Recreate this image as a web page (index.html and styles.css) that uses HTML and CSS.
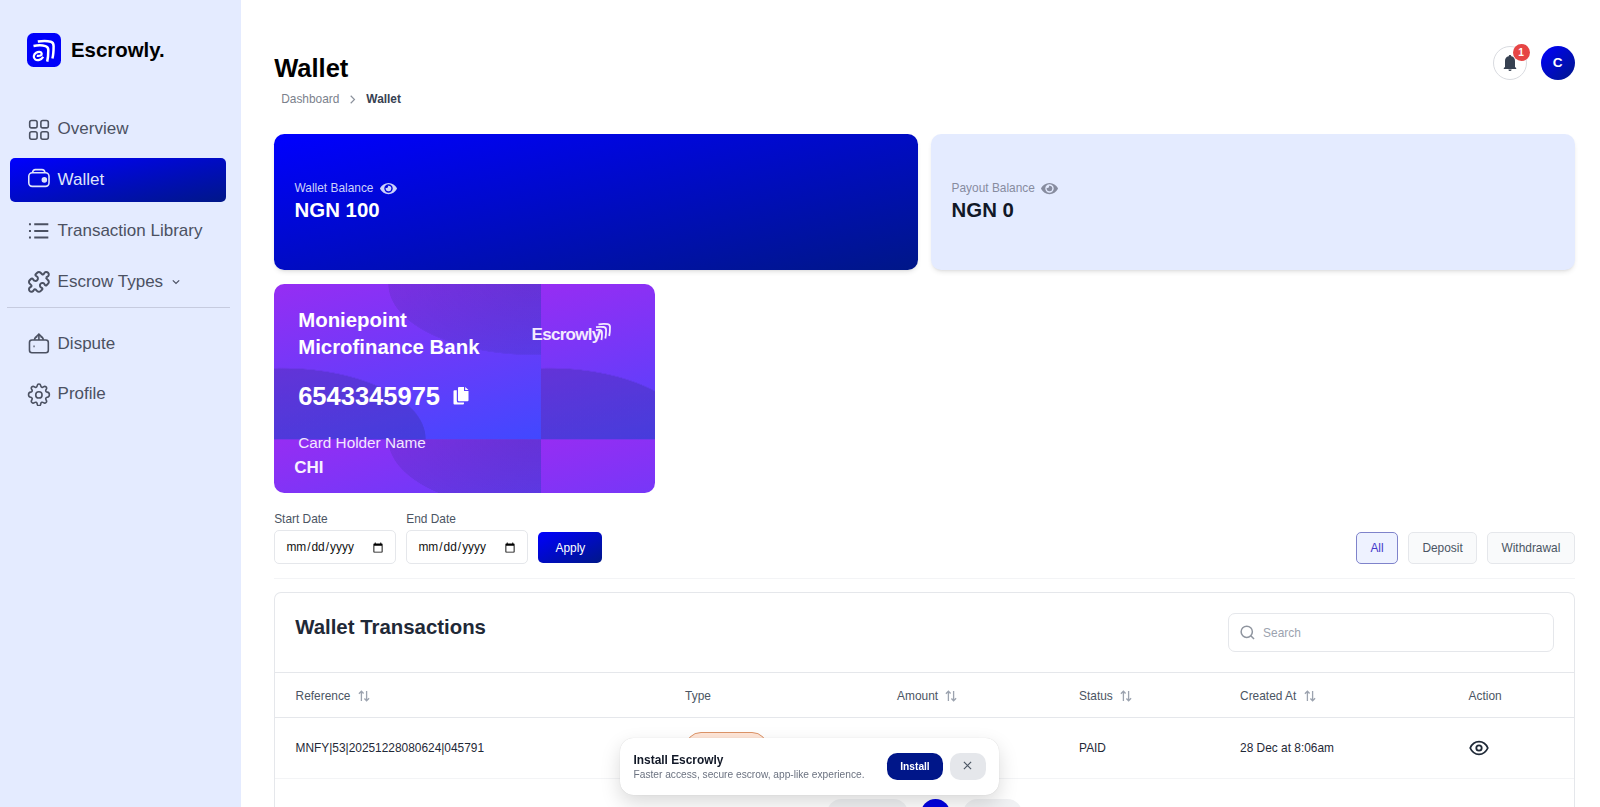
FILE: index.html
```html
<!DOCTYPE html>
<html lang="en">

<head>
    <meta charset="UTF-8">
    <meta name="viewport" content="width=device-width, initial-scale=1.0">
    <title>Escrowly - Wallet</title>
    <link rel="stylesheet" href="styles.css">
</head>

<body>
    <!-- icons used more than once -->
    <svg class="sprite">
        <symbol id="eye" viewBox="0 0 576 512">
            <path fill="currentColor" d="M572.52 241.4C518.29 135.59 410.93 64 288 64S57.68 135.64 3.48 241.41a32.35 32.35 0 0 0 0 29.19C57.71 376.41 165.07 448 288 448s230.32-71.64 284.52-177.41a32.35 32.35 0 0 0 0-29.19zM288 400a144 144 0 1 1 144-144 143.93 143.93 0 0 1-144 144zm0-240a95.31 95.31 0 0 0-25.31 3.79 47.85 47.85 0 0 1-66.9 66.9A95.78 95.78 0 1 0 288 160z" />
        </symbol>
        <symbol id="sort" viewBox="0 0 12 12">
            <path d="M3.4 11V1.2M.9 3.7l2.5-2.5 2.2 2.3M8.6 1v9.8M6.4 8.5l2.2 2.3 2.5-2.5" fill="none" stroke="currentColor" stroke-width="1.3" />
        </symbol>
    </svg>

    <div class="sidebar">
        <div class="brand">
            <svg class="brandLogo" viewBox="0 0 34 34">
                <rect width="34" height="34" rx="6.5" fill="#0000fa" />
                <g fill="none" stroke="#fff">
                    <path d="M10.8 8.6c4-.6 10-.6 13 .2 2.200.6 2.800 1.800 2.800 4.200 0 4.500-.2 9-1.200 12.500" stroke-width="2.500" />
                    <path d="M6.500 13c4-.8 9-.8 12 .1 2.100.6 2.800 1.800 2.800 4 0 4-.2 8-1.100 11.500" stroke-width="2.500" />
                    <path d="M9.800 22.800c3 .5 5.200-.4 4.900-2.200-.4-1.900-3.300-2.200-5.600-.8-2.700 1.700-3.100 5-.9 6.600 2.300 1.600 6 .5 8-2.600" stroke-width="2.200" />
                </g>
            </svg>
            <span>Escrowly.</span>
        </div>

        <ul class="menu">
            <li class="menuItem">
                <svg viewBox="0 0 24 24">
                    <rect x="2.700" y="2.500" width="7.500" height="7.500" rx="2" />
                    <rect x="14" y="2.500" width="7.500" height="7.500" rx="2" />
                    <rect x="2.700" y="13.900" width="7.500" height="7.500" rx="2" />
                    <rect x="14" y="13.900" width="7.500" height="7.500" rx="2" />
                </svg>
                Overview
            </li>
            <li class="menuItem active">
                <svg viewBox="0 0 24 24">
                    <rect x="1.800" y="4.800" width="20.400" height="13.700" rx="3.500" />
                    <path d="M5.500 4.800c.3-2.300 1-3.200 3-3.200h6.600c2 0 2.800.9 3 3.200" />
                    <circle cx="17.500" cy="12" r="2" fill="currentColor" />
                </svg>
                Wallet
            </li>
            <li class="menuItem">
                <svg viewBox="0 0 24 24">
                    <path d="M7.300 5.300h14.200M7.300 12h14.200M7.300 18.700h14.200" stroke-width="2" />
                    <path d="M2 5.300h2M2 12h2M2 18.700h2" stroke-width="2" />
                </svg>
                Transaction Library
            </li>
            <li class="menuItem">
                <svg viewBox="0 0 24 24">
                    <path stroke-width="2" d="M19.439 7.850c-.049.322.059.648.289.878l1.568 1.568c.47.47.706 1.087.706 1.704s-.235 1.233-.706 1.704l-1.611 1.611a.98.98 0 0 1-.837.276c-.47-.07-.802-.48-.968-.925a2.501 2.501 0 1 0-3.214 3.214c.446.166.855.497.925.968a.979.979 0 0 1-.276.837l-1.610 1.610a2.404 2.404 0 0 1-1.705.707 2.402 2.402 0 0 1-1.704-.706l-1.568-1.568a1.026 1.026 0 0 0-.877-.29c-.493.074-.84.504-1.020.968a2.500 2.500 0 1 1-3.237-3.237c.464-.18.894-.527.967-1.020a1.026 1.026 0 0 0-.289-.877l-1.568-1.568A2.402 2.402 0 0 1 1.998 12c0-.617.236-1.234.706-1.704L4.230 8.770c.24-.24.581-.353.917-.303.515.077.877.528 1.073 1.010a2.500 2.500 0 1 0 3.259-3.259c-.482-.196-.933-.558-1.010-1.073-.05-.336.062-.676.303-.917l1.525-1.525A2.402 2.402 0 0 1 12 1.998c.617 0 1.234.236 1.704.706l1.568 1.568c.23.23.556.338.877.29.493-.074.84-.504 1.020-.968a2.500 2.500 0 1 1 3.237 3.237c-.464.18-.894.527-.967 1.020Z" />
                </svg>
                Escrow Types
                <svg class="arrow" viewBox="0 0 10 10"><path d="M1.800 3.300 5 6.500l3.200-3.200" /></svg>
            </li>
        </ul>
        <ul class="menu second">
            <li class="menuItem">
                <svg viewBox="0 0 24 24">
                    <rect x="2.500" y="8" width="19" height="13" rx="2.500" />
                    <path d="M12 8V2.200M9.200 4.900 12 2.200l2.800 2.700M7.500 8c.2-2 1-3.100 3-3.600M16.500 8c-.2-2-1-3.100-3-3.600" />
                    <path d="M6.500 14.500h1.200" />
                </svg>
                Dispute
            </li>
            <li class="menuItem">
                <svg viewBox="0 0 24 24">
                    <path d="M10.300 3.200c.3-2.200 3.100-2.200 3.400 0 .2 1.300 1.400 1.800 2.500 1 1.800-1.300 3.800.6 2.500 2.400-.8 1.200-.3 2.300 1 2.500 2.700.4 2.700 4.400 0 4.800-1.300.3-1.800 1.400-1 2.500 1.300 1.800-.7 3.800-2.500 2.500-1.100-.8-2.300-.3-2.500 1-.3 2.700-3.100 2.700-3.400 0-.2-1.300-1.400-1.800-2.500-1-1.800 1.300-3.800-.7-2.500-2.500.8-1.100.3-2.300-1-2.500-2.700-.4-2.700-4.400 0-4.800 1.300-.2 1.800-1.300 1-2.500C4 4.800 6 2.900 7.800 4.200c1.100.8 2.300.3 2.500-1z" stroke-width="1.500" transform="translate(-.9 -.6) scale(1.08)" />
                    <circle cx="12" cy="12" r="3.200" />
                </svg>
                Profile
            </li>
        </ul>
    </div>

    <div class="main">
        <div class="header">
            <div>
                <h1>Wallet</h1>
                <div class="breadcrumb">
                    <span>Dashboard</span>
                    <svg viewBox="0 0 10 10"><path d="M3 .8 7.200 5 3 9.200" /></svg>
                    <b>Wallet</b>
                </div>
            </div>
            <div class="account">
                <div class="bell">
                    <svg viewBox="0 0 14 16">
                        <path d="M7 0c.8 0 1.200.5 1.300 1.200C10.900 1.700 12 3.600 12 6v6l1.200 1v.9H.8V13L2 12V6c0-2.400 1.100-4.300 3.700-4.800C5.800.5 6.200 0 7 0zM5.400 14.400h3.200a1.600 1.600 0 0 1-3.200 0z" />
                    </svg>
                    <span class="count">1</span>
                </div>
                <div class="avatar">C</div>
            </div>
        </div>

        <div class="balances">
            <div class="balance blue">
                <p>Wallet Balance <svg><use href="#eye" /></svg></p>
                <h2>NGN 100</h2>
            </div>
            <div class="balance light">
                <p>Payout Balance <svg><use href="#eye" /></svg></p>
                <h2>NGN 0</h2>
            </div>
        </div>

        <div class="bankCard">
            <div class="bankTop">
                <h3>Moniepoint Microfinance Bank</h3>
                <div class="cardLogo">
                    <span>Escrowly</span>
                    <svg viewBox="0 0 20 20">
                        <path d="M5.500 2.300c3-.5 7-.5 9.300-.2 1.800.3 2.200 1.200 2.200 3 0 3.500 0 6-.8 9" />
                        <path d="M3 5.200c3-.5 5.500-.5 7.800-.2 1.800.3 2.300 1.200 2.300 3 0 3 0 5.500-.8 8.500" />
                        <path d="M3 8.200c1.500-.3 2.500-.4 3.800-.2 1.700.3 2.200 1.200 2.200 3 0 2.500 0 4.500-.6 7" />
                    </svg>
                </div>
            </div>
            <div class="accountNumber">
                6543345975
                <svg viewBox="0 0 16 18">
                    <path d="M6 0h5v4h4.500v9.200a1 1 0 0 1-1 1H6a1 1 0 0 1-1-1V1a1 1 0 0 1 1-1zM12.200 0l3.300 3h-3.300z" />
                    <path d="M3.800 3.200V14a1.500 1.500 0 0 0 1.500 1.500H11v1a1 1 0 0 1-1 1H1.500a1 1 0 0 1-1-1V4.200a1 1 0 0 1 1-1z" />
                </svg>
            </div>
            <p class="holderLabel">Card Holder Name</p>
            <p class="holder">CHI</p>
        </div>

        <div class="filters">
            <div class="dates">
                <label>Start Date <input type="date"></label>
                <label>End Date <input type="date"></label>
                <button class="apply">Apply</button>
            </div>
            <div class="types">
                <button class="type selected">All</button>
                <button class="type">Deposit</button>
                <button class="type">Withdrawal</button>
            </div>
        </div>

        <div class="transactions">
            <div class="tableTop">
                <h2>Wallet Transactions</h2>
                <div class="search">
                    <svg viewBox="0 0 16 16"><circle cx="7.200" cy="7.200" r="6" /><path d="m11.500 11.500 3.500 3.500" /></svg>
                    <input type="text" placeholder="Search">
                </div>
            </div>
            <div class="row rowHead">
                <div>Reference <svg><use href="#sort" /></svg></div>
                <div>Type</div>
                <div>Amount <svg><use href="#sort" /></svg></div>
                <div>Status <svg><use href="#sort" /></svg></div>
                <div>Created At <svg><use href="#sort" /></svg></div>
                <div>Action</div>
            </div>
            <div class="row">
                <div>MNFY|53|20251228080624|045791</div>
                <div><span class="tag"></span></div>
                <div></div>
                <div>PAID</div>
                <div>28 Dec at 8:06am</div>
                <div>
                    <svg class="view" viewBox="0 0 20 16">
                        <path d="M1.200 8C3 4 6.200 1.700 10 1.700S17 4 18.800 8C17 12 13.800 14.300 10 14.300S3 12 1.200 8z" />
                        <circle cx="10" cy="8" r="2.700" />
                    </svg>
                </div>
            </div>
            <div class="pagination">
                <span class="page prev"></span>
                <span class="page current"></span>
                <span class="page next"></span>
            </div>
        </div>
    </div>

    <div class="install">
        <div class="installText">
            <b>Install Escrowly</b>
            <p>Faster access, secure escrow, app-like experience.</p>
        </div>
        <button class="installBtn">Install</button>
        <button class="closeBtn"><svg viewBox="0 0 10 10"><path d="m1 1 8 8M9 1 1 9" /></svg></button>
    </div>
</body>

</html>
```
FILE: styles.css
```css
* {
    margin: 0;
    padding: 0;
    box-sizing: border-box;
    font-family: "Liberation Sans", Arial, Helvetica, sans-serif;
}

html {
    font-size: 13.6px;
}

body {
    height: 100vh;
    display: flex;
    overflow: hidden;
    background-color: #fff;
    color: #1f2937;
}

.sprite {
    display: none;
}

button {
    border: none;
    cursor: pointer;
    font-size: .875rem;
}

/* sidebar */
.sidebar {
    width: 240.5px;
    flex-shrink: 0;
    background-color: #e4ebff;
    padding-top: 33px;
}

.brand {
    display: flex;
    align-items: center;
    gap: 10px;
    padding-left: 27px;
    height: 34px;
    color: #000;
    font-size: 1.5rem;
    font-weight: bold;
}

.brandLogo {
    width: 34px;
    height: 34px;
}

.menu {
    list-style: none;
    display: flex;
    flex-direction: column;
    gap: 6.6px;
    margin: 40.4px 11px 0 7px;
    padding: 0 3px 3.5px;
    border-bottom: 1px solid #c6cbdf;
}

.second {
    margin-top: 13.2px;
    border: none;
}

.menuItem {
    display: flex;
    align-items: center;
    gap: .5rem;
    width: 216px;
    height: 3.25rem;
    padding-left: 1.25rem;
    border-radius: 5px;
    font-size: 1.25rem;
    color: #4b5162;
}

.menuItem svg {
    width: 1.75rem;
    height: 1.75rem;
    fill: none;
    stroke: currentColor;
    stroke-width: 1.6;
}

.menuItem .arrow {
    width: 10px;
    height: 10px;
    margin-left: 1px;
    stroke-width: 1.2;
}

.active {
    background: linear-gradient(to bottom right, #0000ff, #001788);
    color: #dfe4fb;
}

/* header */
.main {
    flex: 1;
    padding: 46px 25.4px 0 33.7px;
}

.header {
    display: flex;
    justify-content: space-between;
    height: 88.4px;
}

.header h1 {
    margin-top: 7px;
    font-size: 1.875rem;
    line-height: 2.25rem;
    color: #000;
}

.breadcrumb {
    display: flex;
    align-items: center;
    margin-top: 7px;
    padding-left: 7px;
    font-size: .875rem;
    line-height: 1.25rem;
    color: #7b818c;
}

.breadcrumb svg {
    width: 9px;
    height: 9px;
    margin: 0 9px;
    fill: none;
    stroke: #8b919c;
    stroke-width: 1.3;
}

.breadcrumb b {
    color: #374151;
}

.account {
    display: flex;
    gap: 14px;
    padding-top: .4px;
}

.bell {
    position: relative;
    width: 34px;
    height: 34px;
    display: grid;
    place-content: center;
    border: 1px solid #d9dbe0;
    border-radius: 50%;
}

.bell svg {
    width: 14px;
    height: 16px;
    fill: #374151;
}

.count {
    position: absolute;
    top: -3px;
    right: -4px;
    width: 17px;
    height: 17px;
    border-radius: 50%;
    background-color: #e64545;
    color: #fff;
    font-size: 10.2px;
    font-weight: bold;
    line-height: 17px;
    text-align: center;
}

.avatar {
    width: 34px;
    height: 34px;
    border-radius: 50%;
    background: linear-gradient(to bottom right, #0000ff, #001788);
    color: #fff;
    font-size: 1rem;
    font-weight: bold;
    line-height: 34px;
    text-align: center;
}

/* balances */
.balances {
    display: grid;
    grid-template-columns: 1fr 1fr;
    gap: 1rem;
}

.balance {
    height: 10rem;
    padding: 46px 1.5rem 0;
    border-radius: .75rem;
    box-shadow: 0 3px 5px -1px rgba(0, 0, 0, .1), 0 2px 3px -2px rgba(0, 0, 0, .1);
}

.balance p {
    display: flex;
    align-items: center;
    gap: 6.5px;
    font-size: .875rem;
    line-height: 1.25rem;
}

.balance svg {
    width: 17px;
    height: 15px;
}

.balance h2 {
    margin-top: 1.7px;
    font-size: 1.5rem;
    line-height: 1.75rem;
}

.blue {
    background: linear-gradient(to bottom right, #0000ff, #001788);
    color: #fff;
}

.blue p {
    color: #ccd2fa;
}

.light {
    background-color: #e4ebff;
}

.light p {
    color: #878c9f;
}

.light h2 {
    color: #111827;
}

/* bank card */
.bankCard {
    width: 28rem;
    height: 209.4px;
    margin-top: 13.2px;
    padding: 23.5px 1.5rem 0 24px;
    border-radius: .75rem;
    color: #fff;
    background:
        radial-gradient(145px 71px at 259px 0, rgba(40, 40, 120, .25), rgba(40, 40, 120, .16) 99.5%, transparent 100%),
        radial-gradient(144px 71px at 8px 155px, rgba(40, 40, 120, .25) 99.5%, transparent 100%),
        linear-gradient(165deg, #962df3, #4148ff);
    background-size: 267px 155.3px;
}

.bankTop {
    display: flex;
    justify-content: space-between;
}

.bankCard h3 {
    width: 190px;
    font-size: 1.5rem;
    line-height: 2rem;
}

.cardLogo {
    display: flex;
    margin: 16px 22px 0 0;
    font-size: 17px;
    font-weight: bold;
    letter-spacing: -.7px;
    line-height: 24px;
    color: #f3eaff;
}

.cardLogo svg {
    width: 20px;
    height: 20px;
    margin: -1px 0 0 -8px;
    fill: none;
    stroke: currentColor;
    stroke-width: 1.8;
}

.accountNumber {
    display: flex;
    align-items: center;
    gap: 13px;
    margin-top: 17.5px;
    font-size: 1.875rem;
    font-weight: bold;
    line-height: 2.5rem;
}

.accountNumber svg {
    width: 16px;
    height: 18px;
    fill: #fff;
}

.holderLabel {
    margin-top: 18.5px;
    font-size: 1.125rem;
    line-height: 1.75rem;
    color: #f1e8ff;
}

.holder {
    margin: .8px 0 0 -4px;
    font-size: 1.25rem;
    font-weight: bold;
    line-height: 1.75rem;
    color: #f7f0ff;
}

/* filters */
.filters {
    display: flex;
    justify-content: space-between;
    align-items: flex-end;
    margin-top: 18px;
    padding-bottom: 14px;
    border-bottom: 1px solid #f3f4f6;
}

.dates,
.types {
    display: flex;
    align-items: flex-end;
    gap: .75rem;
}

.dates label {
    display: block;
    width: 121.9px;
    font-size: .875rem;
    line-height: 1.25rem;
    color: #4b5563;
}

.dates input {
    display: block;
    width: 100%;
    height: 34px;
    margin-top: 2.5px;
    padding: 0 .7rem 0 .75rem;
    border: 1px solid #e5e7eb;
    border-radius: 5px;
    background-color: #fff;
    font-size: .875rem;
    color: #111;
}

.apply {
    width: 64px;
    height: 31px;
    margin-bottom: 1px;
    border-radius: 5px;
    background: linear-gradient(to bottom right, #0000ff, #001788);
    color: #fff;
}

.type {
    height: 32px;
    padding: 0 13.3px;
    border: 1px solid #e5e7eb;
    border-radius: 5px;
    background-color: #f9fafb;
    color: #4b5563;
}

.selected {
    border-color: #7f83cb;
    background-color: #eef2ff;
    color: #4338ca;
}

/* transactions */
.transactions {
    height: 240px;
    margin-top: 13px;
    border: 1px solid #e5e7eb;
    border-bottom: none;
    border-radius: 7px 7px 0 0;
}

.tableTop {
    display: flex;
    justify-content: space-between;
    height: 80px;
    padding: 20px 20px 0;
    border-bottom: 1px solid #e5e7eb;
}

.tableTop h2 {
    margin-top: .8px;
    font-size: 1.5rem;
    line-height: 2rem;
}

.search {
    display: flex;
    align-items: center;
    gap: 8.5px;
    width: 326px;
    height: 39px;
    padding-left: 11px;
    border: 1px solid #e5e7eb;
    border-radius: 7px;
}

.search svg {
    width: 15px;
    height: 15px;
    fill: none;
    stroke: #8f959f;
    stroke-width: 1.6;
}

.search input {
    border: none;
    outline: none;
    font-size: .875rem;
}

.search input::placeholder {
    color: #9ca3af;
}

.row {
    display: grid;
    grid-template-columns: 389.5px 212px 182px 161px 228.5px 1fr;
    align-items: center;
    height: 60.5px;
    padding-left: 20.4px;
    border-bottom: 1px solid #f3f4f6;
    font-size: .875rem;
}

.rowHead {
    height: 45px;
    padding-top: 1px;
    border-color: #e5e7eb;
    color: #4b5563;
}

.rowHead svg {
    width: 12px;
    height: 12px;
    margin-left: 4px;
    vertical-align: -2px;
    color: #9ca3af;
}

.tag {
    display: block;
    width: 83px;
    height: 32px;
    border: 1px solid #dd9468;
    border-radius: 16px;
    background-color: #ffe6d8;
}

.view {
    display: block;
    width: 20px;
    height: 16px;
    fill: none;
    stroke: #1f2937;
    stroke-width: 1.8;
}

.pagination {
    display: flex;
    justify-content: center;
    gap: 13px;
    margin-top: 20px;
}

.page {
    height: 29px;
    border-radius: 15px;
    background-color: #f0f1f3;
}

.prev {
    width: 81px;
}

.current {
    width: 29px;
    background-color: #0000e0;
}

.next {
    width: 59px;
}

/* install prompt floating over the page */
.install {
    position: fixed;
    left: 620px;
    bottom: 12px;
    display: flex;
    align-items: center;
    width: 379px;
    height: 57.5px;
    padding: 0 13.5px;
    border-radius: 1rem;
    background-color: #fff;
    box-shadow: 0 0 1px rgba(0, 0, 0, .2), 0 8px 20px rgba(0, 0, 0, .15);
}

.installText {
    flex: 1;
    padding-top: 2px;
    font-size: .875rem;
    line-height: 1.1rem;
    color: #111827;
}

.installText p {
    font-size: .75rem;
    line-height: 1rem;
    color: #6b7280;
}

.install button {
    height: 27px;
    border-radius: .75rem;
}

.installBtn {
    width: 56px;
    background-color: #001689;
    color: #fff;
    font-size: .75rem;
    font-weight: bold;
}

.closeBtn {
    width: 35.5px;
    margin-left: 7px;
    background-color: #e5e7eb;
}

.closeBtn svg {
    width: 9px;
    height: 9px;
    stroke: #4b5563;
    stroke-width: 1.3;
}
```
